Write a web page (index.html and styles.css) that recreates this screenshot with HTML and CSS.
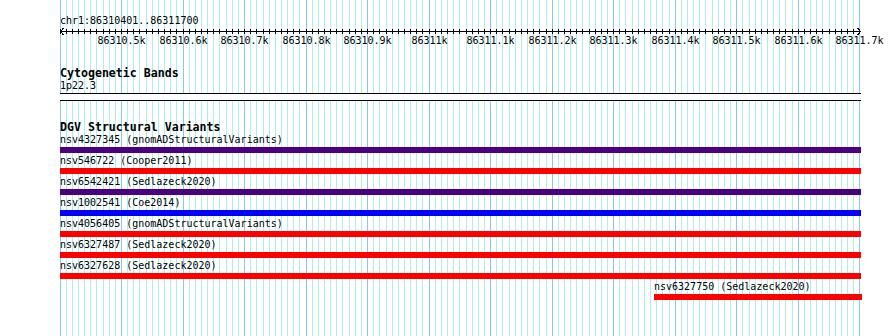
FILE: index.html
```html
<!DOCTYPE html>
<html lang="en">
<head>
    <meta charset="UTF-8">
    <meta name="viewport" content="width=device-width, initial-scale=1.0">
    <title>chr1:86310401..86311700</title>
    <link rel="stylesheet" href="styles.css">
</head>
<body>
    <div class="panel">
        <svg class="grid" id="grid" width="890" height="336"></svg>
        <div class="content">
            <div class="segment">chr1:86310401..86311700</div>
            <svg class="ruler" id="ruler" width="802" height="20"></svg>

            <div class="track track-bands">
                <div class="track-title">Cytogenetic Bands</div>
                <div class="feature-label">1p22.3</div>
                <div class="band"></div>
            </div>

            <div class="track track-dgv">
                <div class="track-title">DGV Structural Variants</div>
                <div class="feature">
                    <div class="feature-label">nsv4327345 (gnomADStructuralVariants)</div>
                    <div class="bar bar-indigo"></div>
                </div>
                <div class="feature">
                    <div class="feature-label">nsv546722 (Cooper2011)</div>
                    <div class="bar bar-red"></div>
                </div>
                <div class="feature">
                    <div class="feature-label">nsv6542421 (Sedlazeck2020)</div>
                    <div class="bar bar-indigo"></div>
                </div>
                <div class="feature">
                    <div class="feature-label">nsv1002541 (Coe2014)</div>
                    <div class="bar bar-blue"></div>
                </div>
                <div class="feature">
                    <div class="feature-label">nsv4056405 (gnomADStructuralVariants)</div>
                    <div class="bar bar-red"></div>
                </div>
                <div class="feature">
                    <div class="feature-label">nsv6327487 (Sedlazeck2020)</div>
                    <div class="bar bar-red"></div>
                </div>
                <div class="feature">
                    <div class="feature-label">nsv6327628 (Sedlazeck2020)</div>
                    <div class="bar bar-red"></div>
                </div>
                <div class="feature feature-tail">
                    <div class="feature-label">nsv6327750 (Sedlazeck2020)</div>
                    <div class="bar bar-red bar-tail"></div>
                </div>
            </div>
        </div>
    </div>

    <script>
        const SVG_NS = 'http://www.w3.org/2000/svg';
        const START = 86310400;
        const STEP = 10;          // bp between grid lines
        const PX_PER_STEP = 6.152;
        const LEFT = 60;

        function el(name, attrs) {
            const node = document.createElementNS(SVG_NS, name);
            for (const key in attrs) {
                node.setAttribute(key, attrs[key]);
            }
            return node;
        }

        function lineX(i) {
            return Math.floor(LEFT + i * PX_PER_STEP);
        }

        const grid = document.getElementById('grid');
        const ruler = document.getElementById('ruler');

        // ruler base line and arrow heads
        ruler.appendChild(el('rect', { x: 0, y: 4, width: 801, height: 1, class: 'ink' }));
        ruler.appendChild(el('polyline', { points: '3.5,1 0.5,4.5 3.5,8', class: 'arrow' }));
        ruler.appendChild(el('polyline', { points: '797.5,1 800.5,4.5 797.5,8', class: 'arrow' }));

        for (let i = 0; i <= 130; i++) {
            const x = lineX(i);
            const major = i % 10 === 0;

            grid.appendChild(el('rect', {
                x: x, y: 0, width: 1, height: 336,
                class: major ? 'grid-major' : 'grid-minor'
            }));

            ruler.appendChild(el('rect', { x: x - LEFT, y: 2, width: 1, height: 5, class: 'ink' }));

            if (major && i > 0) {
                const label = el('text', { x: x - LEFT + 0.5, y: 17, class: 'tick-label' });
                const kb = (START + i * STEP) / 1000;
                label.textContent = kb.toFixed(1).replace(/\.0$/, '') + 'k';
                ruler.appendChild(label);
            }
        }
    </script>
</body>
</html>
```

FILE: styles.css
```css
body {
    margin: 0;
    background-color: #FFFFFF;
    font-family: 'DejaVu Sans Mono', 'Liberation Mono', monospace;
    font-size: 10px;
    color: #000;
}
.panel {
    position: relative;
    width: 890px;
    height: 336px;
    overflow: hidden;
}
.grid {
    position: absolute;
    left: 0;
    top: 0;
    shape-rendering: crispEdges;
}
.grid-minor {
    fill: #AFEEEE;
}
.grid-major {
    fill: #87C8F0;
}
.content {
    position: relative;
    padding-left: 60px;
    width: 802px;
}
.segment {
    margin-top: 15px;
    line-height: 12px;
}
.ruler {
    display: block;
    overflow: visible;
    shape-rendering: crispEdges;
}
.ink {
    fill: #000;
}
.arrow {
    fill: none;
    stroke: #000;
    stroke-width: 1;
}
.tick-label {
    font-family: 'DejaVu Sans Mono', 'Liberation Mono', monospace;
    font-size: 10px;
    text-anchor: middle;
    fill: #000;
}
.track-title {
    margin-top: 21px;
    font-size: 11.6px;
    font-weight: bold;
    line-height: 11px;
}
.feature-label {
    line-height: 10px;
    white-space: nowrap;
}
.track-bands .track-title {
    margin-top: 20px;
    line-height: 12px;
}
.track-bands .feature-label {
    margin-top: 2px;
}
.band {
    width: 801px;
    height: 6px;
    margin-top: 2px;
    background: #FFFFFF;
    border-top: 1px solid #000;
    border-bottom: 1px solid #000;
}
.track-dgv .track-title {
    margin-top: 21px;
    margin-bottom: 2px;
}
.feature {
    margin-bottom: 3px;
}
.feature-tail {
    margin-left: 594px;
}
.bar {
    width: 801px;
    height: 6px;
    margin-top: 2px;
}
.bar-tail {
    width: 208px;
}
.bar-indigo {
    background-color: #4B0082;
}
.bar-red {
    background-color: #FF0000;
}
.bar-blue {
    background-color: #0000FF;
}
```
